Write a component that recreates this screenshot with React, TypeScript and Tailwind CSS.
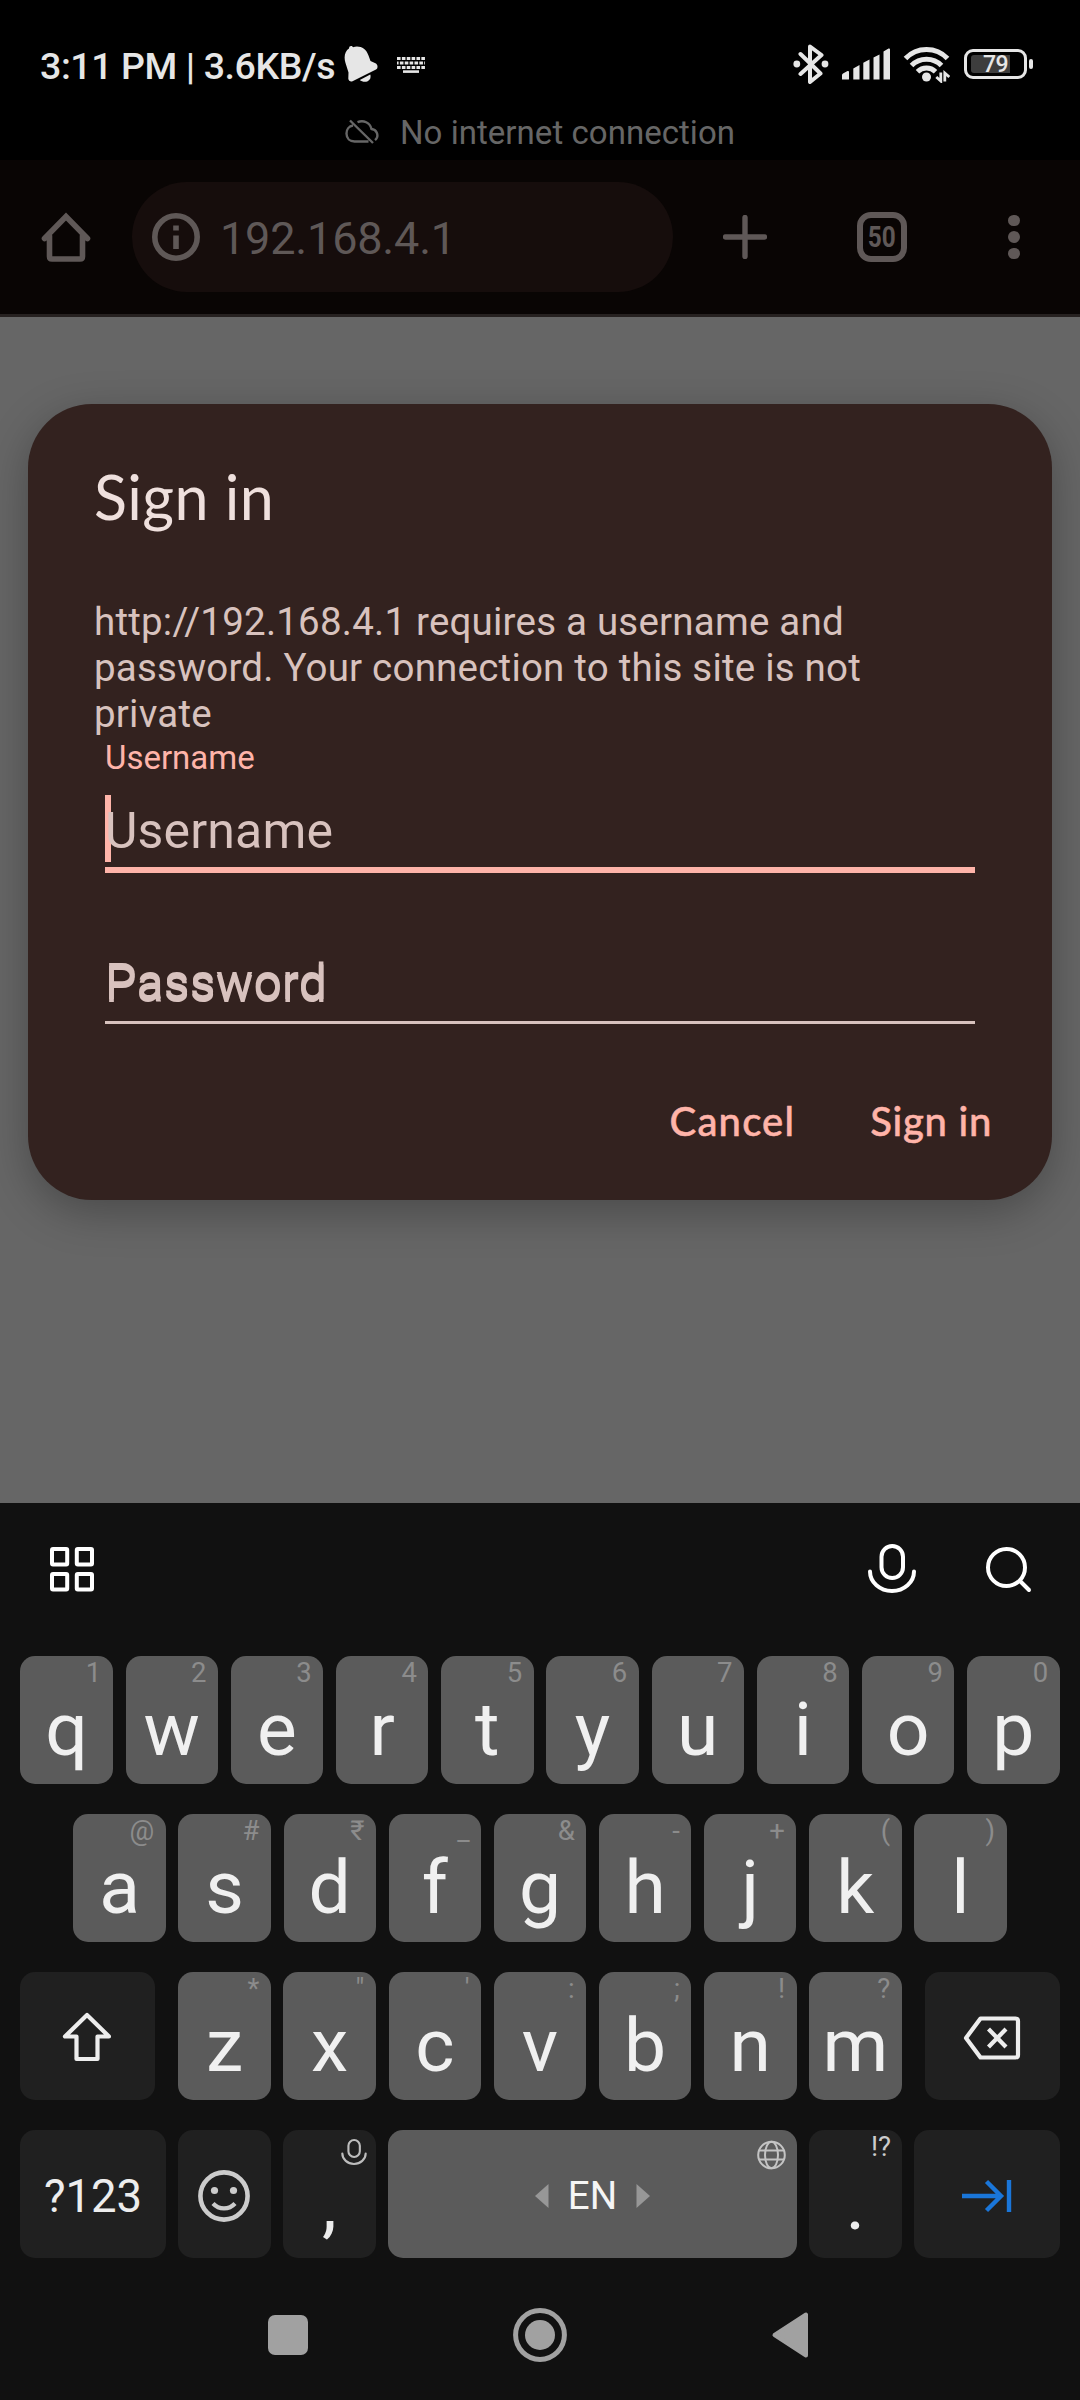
import React from "react";

type IconProps = { w: number; h: number; className?: string; children: React.ReactNode };

function Icon({ w, h, className = "", children }: IconProps) {
  return (
    <svg
      width={w}
      height={h}
      viewBox={`0 0 ${w} ${h}`}
      fill="none"
      stroke="currentColor"
      className={`block shrink-0 ${className}`}
    >
      {children}
    </svg>
  );
}

function StatusBar() {
  return (
    <div className="flex h-[104px] items-center pt-6 pl-10 pr-[47px] text-[#e6e6e6]">
      <span className="w-[304px] shrink-0 whitespace-nowrap pt-[4px] text-[37.5px] font-medium leading-[48px] tracking-[-0.42px]">
        3:11 PM | 3.6KB/s
      </span>
      <Icon w={34} h={38}>
        <g stroke="none" fill="currentColor">
          <path d="M5 3.500C5 .5 8 .3 9 2.200c7-2 13 1.300 15.500 8.300l2 5.500 5.500 2.500c2 1.500 2 5 0 6L8.500 36.300c-2 .8-4-.5-4.200-2.500l.2-6.300L1.500 18C-.5 11.500 1 6 5 3.500Z" />
          <path d="M15.800 35 26.300 29.500c1 3.500-.8 6.700-4.300 7.200-2.500.2-4.700-.3-6.200-1.700Z" />
        </g>
      </Icon>
      <Icon w={28} h={16} className="ml-[19px] mt-[1px]">
        <path d="M0 1.500h28M0 10.500h28" strokeWidth={2.8} strokeDasharray="3.600 1.270" />
        <path d="M0 6h28" strokeWidth={2.8} strokeDasharray="3.600 1.270" strokeDashoffset={2} />
        <path d="M6 14.600h16" strokeWidth={2.6} />
      </Icon>
      <div className="ml-auto flex items-center">
        <Icon w={36} h={40}>
          <path
            d="m7.500 10 20 19.500L17 38V2.500l11.500 8.500L7.500 30"
            strokeWidth={4}
            strokeLinejoin="round"
            strokeLinecap="round"
          />
          <circle cx="3.800" cy="20" r="3.400" stroke="none" fill="currentColor" />
          <circle cx="32" cy="20" r="3.400" stroke="none" fill="currentColor" />
        </Icon>
        <Icon w={48} h={32} className="ml-[13px]">
          <g stroke="none" fill="currentColor">
            <path d="M0 31.500v-4.500Q0 26 1 25.500l4.500-2.500q1.500-.5 1.500 1V31q0 .5-.5.5ZM11.300 31.500V20.500l6.200-3.500v14.500ZM21.300 31.500V14.800l6.200-3.200v19.900ZM31.500 31.500V9.500l6-3v25ZM41.500 31.500V3.600l5-3q1.500-.5 1.500 1v29.900Z" />
          </g>
        </Icon>
        <Icon w={47} h={38} className="ml-[12.500px]">
          <g strokeWidth={5}>
            <path d="M2.500 13.500a29 29 0 0 1 42 0" />
            <path d="M8.500 20.500a21 21 0 0 1 30 0" />
            <path d="M14.500 26.700a13 13 0 0 1 18 0" />
          </g>
          <circle cx="23.500" cy="32" r="4.500" stroke="none" fill="currentColor" />
          <path d="M37.800 27.500v8.500l-4.500-4M41.800 36.500V28l4.500 4" strokeWidth={2.800} />
        </Icon>
        <div className="ml-[14.500px] flex items-center">
          <div className="flex h-[30px] w-[63px] items-center rounded-[9px] border-[3px] border-[#e6e6e6] px-[4px]">
            <div className="flex h-[18px] w-[39px] items-center justify-end rounded-l-[3px] bg-[#3d3d3d] pr-[2px] text-[23px] font-medium leading-none tracking-tight">
              79
            </div>
          </div>
          <div className="ml-[2px] h-[10px] w-[4px] rounded-full bg-[#e6e6e6]" />
        </div>
      </div>
    </div>
  );
}

function OfflineNotice() {
  return (
    <div className="flex h-14 items-center pl-[345px] text-[#666666]">
      <Icon w={34} h={26}>
        <path
          d="m5 1.500 23 22.500M8 6.500C4 7 1.500 10.500 1.500 14.500c0 5 3.500 8 8 8h14M12.500 3.200C18.500.8 25 3.500 26.500 10c5.500.5 6.500 6 5.500 8.500-.6 1.300-1.200 2-2 2.600"
          strokeWidth={2.400}
        />
      </Icon>
      <span className="ml-[21px] pt-[2px] text-[33px] leading-[40px] tracking-[0.04px]">No internet connection</span>
    </div>
  );
}

function BrowserToolbar() {
  return (
    <div className="flex h-[157px] items-center border-b-[3px] border-[#262120] bg-[#090504] pl-[41px] text-[#5f5857]">
      <Icon w={50} h={50}>
        <path
          d="M3.500 26.500 25 4.500l21.500 22M8.500 24v20.500c0 1.500.8 2.500 2.500 2.500h28c1.700 0 2.500-1 2.500-2.500V24"
          strokeWidth={5.600}
          strokeLinecap="round"
        />
      </Icon>
      <div className="ml-[41px] flex h-[110px] w-[541px] items-center rounded-full bg-[#160d0c] pl-5">
        <Icon w={48} h={48}>
          <circle cx="24" cy="24" r="21.200" strokeWidth={5.600} />
          <path d="M24 12.500v5M24 22.500v13.500" strokeWidth={5.600} />
        </Icon>
        <span className="ml-[20px] pt-[3px] text-[45px] leading-[54px] tracking-[-0.18px]">192.168.4.1</span>
      </div>
      <Icon w={44} h={44} className="ml-[50px]">
        <path d="M22 2.500v39M2.500 22h39" strokeWidth={5.400} strokeLinecap="round" />
      </Icon>
      <div className="ml-[90px] flex h-[50px] w-[50px] items-center justify-center rounded-[14px] border-[6px] border-[#5f5857] text-[29px] font-bold leading-none">
        <span className="inline-block scale-x-[0.84]">50</span>
      </div>
      <div className="ml-[101px] flex flex-col gap-[5px]">
        <div className="size-[11.500px] rounded-full bg-[#5f5857]" />
        <div className="size-[11.500px] rounded-full bg-[#5f5857]" />
        <div className="size-[11.500px] rounded-full bg-[#5f5857]" />
      </div>
    </div>
  );
}

function SignInDialog() {
  return (
    <div className="mx-7 h-[796px] rounded-[64px] bg-[#33221f] pl-[66px] pt-[57px] shadow-[0_12px_44px_rgba(0,0,0,0.28)]">
      <h1 className="font-['Lato'] text-[61px] leading-[72px] tracking-[0.4px] text-[#efe0dd]">Sign in</h1>
      <p className="mt-[66px] text-[38.500px] leading-[46px] tracking-[0.21px] text-[#d8c2be]">
        http://192.168.4.1 requires a username and
        <br />
        password. Your connection to this site is not
        <br />
        private
      </p>
      <div className="ml-[11px] w-[870px] text-[#d8c2be]">
        <label className="mt-px block text-[33px] leading-[40px] text-[#ffb4a9]">Username</label>
        <div className="relative mt-[23px] border-b-[6px] border-[#ffb4a9] pb-[6px] text-[50px] leading-[60px] tracking-[0.15px]">
          <div className="absolute -top-[6px] left-0 h-[67px] w-[6px] bg-[#ffb4a9]" />
          <span className="relative">Username</span>
        </div>
        <div className="mt-[82px] border-b-[3px] border-[#d8c2be] pb-[6px] text-[50px] leading-[60px] tracking-[0.15px] [text-shadow:0_-3px_0_#d8c2be]">
          Password
        </div>
      </div>
      <div className="mt-[73px] flex justify-end gap-[75px] pr-[60px] font-['Lato'] text-[40px] font-medium leading-[48px] text-[#ffb4a9] [-webkit-text-stroke:0.5px_#ffb4a9]">
        <button className="tracking-[1.2px]">Cancel</button>
        <button className="tracking-[0.7px]">Sign in</button>
      </div>
    </div>
  );
}

function MicIcon({ className = "" }: { className?: string }) {
  return (
    <svg
      viewBox="0 0 48 49"
      fill="none"
      stroke="currentColor"
      strokeWidth={4}
      strokeLinecap="round"
      className={`block shrink-0 ${className}`}
    >
      <rect x="13.500" y="2" width="21.500" height="32" rx="10.750" />
      <path d="M2 27.500a22 19.500 0 0 0 44 0" />
    </svg>
  );
}

function LetterKey({ letter, hint }: { letter: string; hint: string }) {
  return (
    <div className="flex h-32 w-[92.500px] flex-col rounded-[15px] bg-[#5b5b5b]">
      <span className="h-[34px] self-end pr-[11.500px] text-[27.500px] leading-[34px] text-[#8c8c8c]">{hint}</span>
      <span className="self-center text-[75px] leading-[79px] text-[#f0f0f0]">{letter}</span>
    </div>
  );
}

const topRow = [["q", "1"], ["w", "2"], ["e", "3"], ["r", "4"], ["t", "5"], ["y", "6"], ["u", "7"], ["i", "8"], ["o", "9"], ["p", "0"]];
const homeRow = [["a", "@"], ["s", "#"], ["d", "₹"], ["f", "_"], ["g", "&"], ["h", "-"], ["j", "+"], ["k", "("], ["l", ")"]];
const bottomRow = [["z", "*"], ["x", '"'], ["c", "'"], ["v", ":"], ["b", ";"], ["n", "!"], ["m", "?"]];

function Keyboard() {
  return (
    <div className="h-[755px] shrink-0 bg-[#111111]">
      <div className="flex h-[152.500px] items-start pl-[50px] text-white">
        <Icon w={44} h={45} className="mt-[44px]">
          <g strokeWidth={4}>
            <rect x="2" y="2" width="15.200" height="15.400" rx="1" />
            <rect x="26.800" y="2" width="15.200" height="15.400" rx="1" />
            <rect x="2" y="27" width="15.200" height="15.400" rx="1" />
            <rect x="26.800" y="27" width="15.200" height="15.400" rx="1" />
          </g>
        </Icon>
        <MicIcon className="ml-[774px] mt-[41px] h-[49px] w-[48px]" />
        <Icon w={46} h={46} className="ml-[70px] mt-[44px]">
          <circle cx="20.500" cy="20.500" r="18.500" strokeWidth={4} />
          <path d="m34.500 34.500 8.500 8.500" strokeWidth={4} strokeLinecap="round" />
        </Icon>
      </div>
      <div className="flex flex-col gap-[30px]">
        <div className="flex justify-between px-[20.300px]">
          {topRow.map(([l, h]) => (
            <LetterKey key={l} letter={l} hint={h} />
          ))}
        </div>
        <div className="flex justify-between px-[73.300px]">
          {homeRow.map(([l, h]) => (
            <LetterKey key={l} letter={l} hint={h} />
          ))}
        </div>
        <div className="flex justify-between px-[20px]">
          <div className="flex h-32 w-[135px] items-center justify-center rounded-[15px] bg-[#202020] text-[#ededed]">
            <Icon w={50} h={52} className="mt-[3px] mr-px">
              <path d="M25 4 3 25.500h11.500V48h21V25.500H47L25 4Z" strokeWidth={4.200} strokeLinejoin="round" />
            </Icon>
          </div>
          <div className="flex w-[723.500px] justify-between">
            {bottomRow.map(([l, h]) => (
              <LetterKey key={l} letter={l} hint={h} />
            ))}
          </div>
          <div className="flex h-32 w-[135px] items-center justify-center rounded-[15px] bg-[#202020] text-[#ededed]">
            <Icon w={58} h={44} className="mt-[5px] mr-px">
              <path
                d="M17.500 2.500h35c1.500 0 2.500 1 2.500 2.500v34c0 1.500-1 2.500-2.500 2.500h-35L3 22 17.500 2.500Z"
                strokeWidth={4.200}
                strokeLinejoin="round"
              />
              <path d="m25.500 13 17.500 18M43 13l-17.500 18" strokeWidth={4.200} />
            </Icon>
          </div>
        </div>
        <div className="flex gap-[12px] pl-[20px]">
          <div className="flex h-32 w-[146px] items-center justify-center rounded-[15px] bg-[#202020] pt-[7px] text-[45.500px] leading-[54px] text-[#ededed]">
            ?123
          </div>
          <div className="flex h-32 w-[93px] items-center justify-center rounded-[15px] bg-[#202020] text-[#cccccc]">
            <Icon w={52} h={52} className="mt-[4px] mr-px">
              <circle cx="26" cy="26" r="23.600" strokeWidth={4.600} />
              <circle cx="16.500" cy="20.500" r="3.600" stroke="none" fill="currentColor" />
              <circle cx="35.500" cy="20.500" r="3.600" stroke="none" fill="currentColor" />
              <path d="M15 33.500c6 6.500 16 6.500 22 0" strokeWidth={4.200} />
            </Icon>
          </div>
          <div className="flex h-32 w-[93px] flex-col rounded-[15px] bg-[#202020]">
            <MicIcon className="mr-[9px] mt-[9px] h-[26px] w-[26px] self-end text-[#bdbdbd]" />
            <span className="mt-px self-center text-[75px] leading-[75px] text-[#ededed]">,</span>
          </div>
          <div className="flex h-32 w-[409px] justify-between rounded-[15px] bg-[#5b5b5b] pl-[147px] pr-[11px]">
            <div className="flex items-center pt-[5px]">
              <Icon w={14} h={24} className="text-[#979797]">
                <path d="M13.500 0v24L0 12Z" stroke="none" fill="currentColor" />
              </Icon>
              <span className="w-[87px] text-center text-[38.500px] leading-[46px] text-[#f5f5f5]">EN</span>
              <Icon w={14} h={24} className="text-[#979797]">
                <path d="M.5 0v24L14 12Z" stroke="none" fill="currentColor" />
              </Icon>
            </div>
            <Icon w={29} h={30} className="mt-[10px] text-[#c4c4c4]">
              <g strokeWidth={2}>
                <circle cx="14.500" cy="15" r="13.300" />
                <ellipse cx="14.500" cy="15" rx="6.500" ry="13.300" />
                <path d="M2 10.500h25M2 19.500h25" />
              </g>
            </Icon>
          </div>
          <div className="flex h-32 w-[93px] flex-col rounded-[15px] bg-[#202020]">
            <span className="h-[34px] self-end pr-[11px] text-[27.500px] leading-[34px] text-[#cccccc]">!?</span>
            <span className="self-center text-[75px] leading-[79px] text-[#ededed]">.</span>
          </div>
          <div className="flex h-32 w-[146px] items-center justify-center rounded-[15px] bg-[#202020] text-[#1a76d9]">
            <Icon w={50} h={34} className="mt-[4px]">
              <path d="M0 17h39M24.500 2.500 39 17 24.500 31.500M47 1v32" strokeWidth={4.400} />
            </Icon>
          </div>
        </div>
      </div>
    </div>
  );
}

function NavigationBar() {
  return (
    <div className="flex flex-1 items-center bg-[#111111] pt-3 pl-[268px] text-[#a1a1a1]">
      <div className="size-[40px] rounded-[7px] bg-[#a1a1a1]" />
      <Icon w={54} h={54} className="ml-[205px]">
        <circle cx="27" cy="27" r="24.400" strokeWidth={5} />
        <circle cx="27" cy="27" r="15" stroke="none" fill="currentColor" />
      </Icon>
      <Icon w={38} h={48} className="ml-[204px]">
        <path
          d="M35 3.500v41L3.500 24Z"
          strokeWidth={4}
          strokeLinejoin="round"
          fill="currentColor"
        />
      </Icon>
    </div>
  );
}

export default function App() {
  return (
    <div className="flex h-[2400px] w-[1080px] flex-col overflow-hidden bg-black font-['Roboto',sans-serif]">
      <StatusBar />
      <OfflineNotice />
      <BrowserToolbar />
      <main className="h-[1186px] shrink-0 overflow-hidden bg-[#666666] pt-[87px]">
        <SignInDialog />
      </main>
      <Keyboard />
      <NavigationBar />
    </div>
  );
}
